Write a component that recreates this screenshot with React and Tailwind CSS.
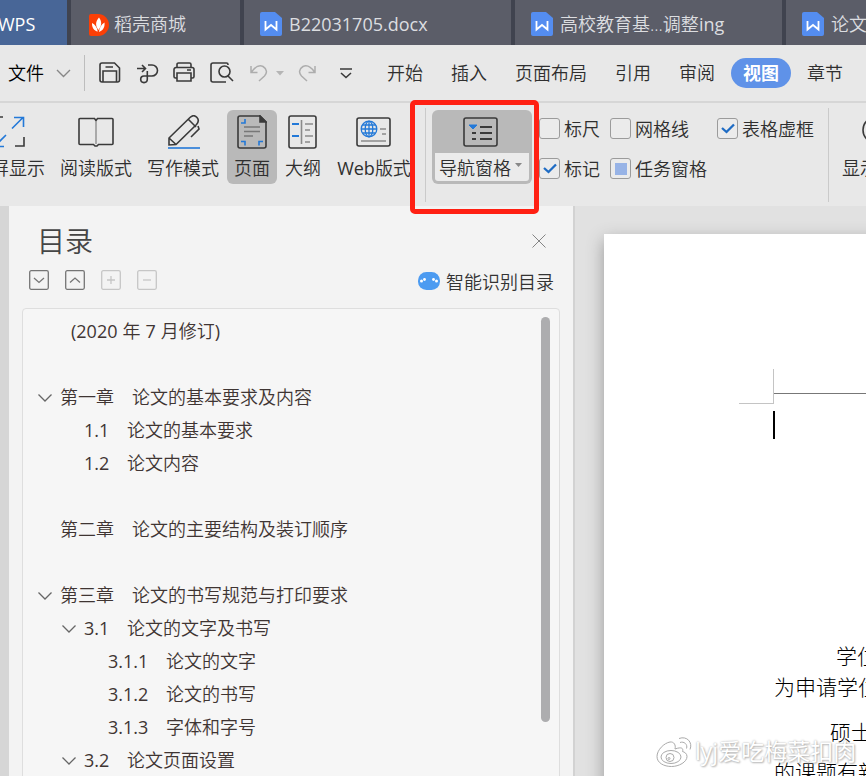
const tabs = [
  { title: "B22031705", suffix: ".docx", width: "w-[267px]" },
  { title: "高校教育基...调整", suffix: "ing", width: "w-[267px]" },
  { title: "论文格式", width: "w-[267px]" },
];

const outline = [
  { blank: true, dated: true },
  { blank: true },
  { num: "第一章", text: "论文的基本要求及内容", open: true, indent: "pl-[60px]", numWidth: "w-[72px]" },
  { num: "1.1", text: "论文的基本要求", indent: "pl-[84px]", numWidth: "w-[43px] font-normal" },
  { num: "1.2", text: "论文内容", indent: "pl-[84px]", numWidth: "w-[43px] font-normal" },
  { blank: true },
  { num: "第二章", text: "论文的主要结构及装订顺序", indent: "pl-[60px]", numWidth: "w-[72px]" },
  { blank: true },
  { num: "第三章", text: "论文的书写规范与打印要求", open: true, indent: "pl-[60px]", numWidth: "w-[72px]" },
  { num: "3.1", text: "论文的文字及书写", open: true, indent: "pl-[84px]", numWidth: "w-[43px] font-normal" },
  { num: "3.1.1", text: "论文的文字", indent: "pl-[108px]", numWidth: "w-[58px] font-normal" },
  { num: "3.1.2", text: "论文的书写", indent: "pl-[108px]", numWidth: "w-[58px] font-normal" },
  { num: "3.1.3", text: "字体和字号", indent: "pl-[108px]", numWidth: "w-[58px] font-normal" },
  { num: "3.2", text: "论文页面设置", open: true, indent: "pl-[84px]", numWidth: "w-[43px] font-normal" },
];

function Icon({ w, h, className = "", children, stroke = "#3a3a3a", sw = 1.6 }) {
  return (
    <svg
      width={w}
      height={h}
      viewBox={`0 0 ${w} ${h}`}
      fill="none"
      stroke={stroke}
      strokeWidth={sw}
      className={`block shrink-0 ${className}`}
    >
      {children}
    </svg>
  );
}

function WordIcon() {
  return (
    <Icon w={22} h={24} stroke="none" className="mt-[3px]">
      <path d="M2 0h13l7 6v16a2 2 0 0 1-2 2H2a2 2 0 0 1-2-2V2a2 2 0 0 1 2-2z" fill="#548df0" />
      <path d="M5.500 9v8.500l5.500-4.500 5.500 4.500V9" stroke="#fff" strokeWidth="1.800" />
    </Icon>
  );
}

function TabBar() {
  return (
    <div className="flex h-[45px] shrink-0 gap-1 bg-[#40434f] text-lg text-[#dcdde0]">
      <div className="flex w-[67px] shrink-0 items-center bg-[#486697] text-white">
        <span className="mt-[3px] -ml-[2px] font-normal">WPS</span>
      </div>
      <div className="flex w-[169px] shrink-0 items-center bg-[#5b5d68] pl-[18px]">
        <Icon w={20} h={22} stroke="none" className="mt-1">
          <path d="M2 0h7a11 11 0 0 1 0 22H2a2 2 0 0 1-2-2V2a2 2 0 0 1 2-2z" fill="#fb3f06" />
          <path d="M10 3.500c3 4 3 8-.6 12.500C6 11.500 6.500 7.500 10 3.500z" fill="#fff" />
          <path d="M3 9c3 1.500 5 4 5.800 8.500C5 17 2.800 13.500 3 9zM15.500 8.500c.5 5-1.500 8-5.500 9.500.4-4 2-7.500 5.500-9.500z" fill="#fff" />
        </Icon>
        <span className="mt-[3px] ml-[5px]">稻壳商城</span>
      </div>
      {tabs.map((tab, i) => (
        <div key={tab.title} className={`flex shrink-0 items-center bg-[#5b5d68] pl-4 ${tab.width}`}>
          <WordIcon />
          <span className={`mt-[3px] ml-[7px] whitespace-nowrap ${i === 0 ? "font-normal" : ""}`}>
            {tab.title}
            <span className="font-normal">{tab.suffix}</span>
          </span>
        </div>
      ))}
    </div>
  );
}

function MenuBar() {
  return (
    <div className="flex h-[56px] shrink-0 items-center whitespace-nowrap text-lg text-[#2f2f2f]">
      <span className="ml-2 text-black">文件</span>
      <Icon w={15} h={9} stroke="#888" sw={1.400} className="ml-3">
        <path d="M1 1l6.500 6.500L14 1" />
      </Icon>
      <div className="ml-[13px] h-9 w-px bg-[#bdbdbd]" />
      <Icon w={22} h={21} className="-mt-[2px] ml-[14px]">
        <path d="M3 1h12.500l5 5v12a2 2 0 0 1-2 2H3a2 2 0 0 1-2-2V3a2 2 0 0 1 2-2z" />
        <path d="M4 20v-11h13.500v11M6.500 5H14" />
      </Icon>
      <Icon w={22} h={21} className="ml-[16px]">
        <path d="M0 5.500h8M5 2l3.500 3.500L5 9M11 2h4a5.500 5.500 0 0 1 0 11H7a3.300 3.300 0 1 0 3.300 3.300V8" />
      </Icon>
      <Icon w={22} h={21} className="-mt-[2px] ml-[14px]">
        <path d="M4 5V2.500A1.500 1.500 0 0 1 5.500 1h11A1.500 1.500 0 0 1 18 2.500V5M4 16H2.500A1.500 1.500 0 0 1 1 14.500v-7A2 2 0 0 1 3 5.500h16a2 2 0 0 1 2 2v7a1.500 1.500 0 0 1-1.500 1.500H18M4 11h14v8H4zM14 8h4" />
      </Icon>
      <Icon w={24} h={21} className="-mt-[2px] ml-[15px]">
        <path d="M18 3V2.500A1.500 1.500 0 0 0 16.500 1H3a2 2 0 0 0-2 2v15a2 2 0 0 0 2 2h13" />
        <circle cx="14.500" cy="9.500" r="5.500" />
        <path d="M18 14l5 5" />
      </Icon>
      <Icon w={18} h={18} stroke="#adadad" sw={1.500} className="ml-[16px]">
        <path d="M1 2v6.500h6.500M1.500 8C5 3 9 .5 13 2.500c4 2.500 4.500 6.500 1.500 9.500L9 17" />
      </Icon>
      <Icon w={8} h={5} stroke="none" className="ml-[8px]">
        <path d="M0 0h8L4 4.500z" fill="#b5b5b5" />
      </Icon>
      <Icon w={18} h={18} stroke="#adadad" sw={1.500} className="ml-[14px]">
        <path d="M17 2v6.500h-6.500M16.500 8C13 3 9 .5 5 2.500c-4 2.500-4.500 6.500-1.500 9.500L9 17" />
      </Icon>
      <Icon w={12} h={11} className="ml-[24px]">
        <path d="M0 1h12M1 5l5 4.500L11 5" />
      </Icon>
      <span className="ml-[35px]">开始</span>
      <span className="ml-7">插入</span>
      <span className="ml-7">页面布局</span>
      <span className="ml-7">引用</span>
      <span className="ml-7">审阅</span>
      <span className="ml-4 flex h-[30px] w-[60px] items-center justify-center rounded-full bg-[#5f92e8] font-bold text-white">
        视图
      </span>
      <span className="ml-4">章节</span>
    </div>
  );
}

function Tool({ label, className, children }) {
  return (
    <div className={`flex h-[74px] shrink-0 flex-col items-center ${className}`}>
      <div className="flex h-[44px] items-center">{children}</div>
      <span className="text-lg leading-[28px]">{label}</span>
    </div>
  );
}

function Check({ label, state }) {
  return (
    <div className="flex h-[21px] items-center whitespace-nowrap text-lg">
      <span className="flex size-[21px] shrink-0 items-center justify-center rounded-[3px] border-[1.500px] border-[#9b9b9b] bg-[#ebebeb]">
        {state === "on" && (
          <Icon w={14} h={11} stroke="#1f6cc4" sw={2.300}>
            <path d="M1 5l4.500 4L13 1.500" />
          </Icon>
        )}
        {state === "mixed" && <span className="size-3 bg-[#97b3e6]" />}
      </span>
      <span className="ml-1">{label}</span>
    </div>
  );
}

function Ribbon() {
  return (
    <div className="flex h-[105px] shrink-0 items-start border-t-2 border-[#d6d6d6] pt-[7px] whitespace-nowrap text-[#2f2f2f]">
      <Tool label="全屏显示" className="-ml-[27px] w-[72px]">
        <Icon w={32} h={32}>
          <path d="M1 10V1h9M31 21v9h-9" />
          <path d="M19 12.500L30 1.500M21 1.500h9.500V11M13 19L2 30M2 21v9.500h9" stroke="#2379d8" />
        </Icon>
      </Tool>
      <Tool label="阅读版式" className="ml-[15px] w-[72px]">
        <Icon w={36} h={30} className="-ml-px">
          <path d="M18 3.500L16.500 1.500H2a1 1 0 0 0-1 1v24a1 1 0 0 0 1 1h13.500l1.500 1.500h2l1.500-1.500H34a1 1 0 0 0 1-1v-24a1 1 0 0 0-1-1H19.500z" />
          <path d="M18 4v23" stroke="#999" />
        </Icon>
      </Tool>
      <Tool label="写作模式" className="ml-[15px] w-[72px]">
        <Icon w={32} h={34} className="ml-[2px]">
          <path d="M1 30V23L22 2.500c2.500-2.500 5-2.300 7 0s1.700 4.500-.5 7L8 29.500zM1 23l7 6.500M20 4l8 8M30 11l1 3-8 8" />
          <path d="M0 33h32" stroke="#2379d8" />
        </Icon>
      </Tool>
      <Tool label="页面" className="ml-[8px] w-[50px] rounded-md bg-[#b9b9b9]">
        <Icon w={30} h={34}>
          <path d="M3 1h20l6 6v24a2 2 0 0 1-2 2H3a2 2 0 0 1-2-2V3a2 2 0 0 1 2-2z" />
          <path d="M23 1v6h6z" fill="#3a3a3a" />
          <path d="M7 12h16M7 16.500h16M7 21h9" stroke="#777" />
          <path d="M4 8h4V4M4 26.500h4v4M26 26.500h-4v4" stroke="#2379d8" />
        </Icon>
      </Tool>
      <Tool label="大纲" className="ml-[8px] w-9">
        <Icon w={29} h={34} className="-ml-[2px]">
          <rect x="1" y="1" width="27" height="32" rx="2" />
          <path d="M13.500 5v24M17 9h8M17 15h5M17 21h8M17 27h5" stroke="#8a8a8a" />
          <path d="M4 9h7M4 21h7" stroke="#2379d8" strokeWidth="2" />
        </Icon>
      </Tool>
      <Tool label={<><span className="font-normal">Web</span>版式</>} className="ml-[15px] w-[76px]">
        <Icon w={35} h={30} className="-ml-[2px]">
          <rect x="1" y="1" width="33" height="28" rx="2" />
          <path d="M24 12h6M26 17h4M5 24h25" stroke="#8a8a8a" />
          <g stroke="#2379d8" strokeWidth="1.300">
            <circle cx="13" cy="12" r="7.800" />
            <ellipse cx="13" cy="12" rx="3.800" ry="7.800" />
            <path d="M13 4v16M5 12h16M6.500 8h13M6.500 16h13" />
          </g>
        </Icon>
      </Tool>
      <div className="-mt-[2px] ml-[13px] h-[94px] w-px shrink-0 bg-[#cacaca]" />
      <div className="ml-[6px] flex h-[74px] w-[100px] shrink-0 flex-col rounded-md bg-[#b9b9b9] p-[3px] pt-0">
        <div className="flex h-[43px] items-center justify-center">
          <Icon w={35} h={30} className="-ml-[3px]">
            <rect x="1" y="1" width="33" height="28" rx="2" />
            <path d="M17 10h12M17 16h12M17 22h12M9 16h4M9 22h4" strokeWidth="2" />
            <path d="M6 8h8l-4 4z" fill="#2379d8" stroke="#2379d8" strokeWidth="1" />
          </Icon>
        </div>
        <div className="flex h-7 items-center rounded-b-[3px] bg-[#ebebeb] pl-[4px] text-lg">
          <span className="mt-[2px] leading-7">导航窗格</span>
          <Icon w={7} h={5} stroke="none" className="-mt-[4px] ml-1">
            <path d="M0 0h7L3.500 4z" fill="#888" />
          </Icon>
        </div>
      </div>
      <div className="ml-[7px] grid grid-cols-[71px_107px_auto] gap-y-[19px] pt-[8px]">
        <Check label="标尺" />
        <Check label="网格线" />
        <Check label="表格虚框" state="on" />
        <Check label="标记" state="on" />
        <Check label="任务窗格" state="mixed" />
      </div>
      <div className="-mt-[2px] ml-[14px] h-[94px] w-px shrink-0 bg-[#cacaca]" />
      <Tool label="显示比例" className="ml-[13px] w-[72px]">
        <Icon w={34} h={34}>
          <circle cx="15" cy="15" r="13" />
          <path d="M25 25l8 8" />
        </Icon>
      </Tool>
    </div>
  );
}

function BoxButton({ path, dim }) {
  return (
    <Icon w={20} h={20} stroke={dim ? "#c6c6c6" : "#757575"} sw={1.300}>
      <rect x="0.700" y="0.700" width="18.600" height="18.600" rx="1.500" />
      <path d={path} />
    </Icon>
  );
}

function OutlineRow({ row }) {
  if (row.dated) {
    return (
      <div className="flex h-[33px] items-center gap-[5px] pl-[48px] whitespace-nowrap">
        <span className="font-normal">(2020</span>
        <span>年</span>
        <span className="font-normal">7</span>
        <span>
          月修订<span className="font-normal">)</span>
        </span>
      </div>
    );
  }
  if (row.blank) return <div className="h-[33px]" />;
  return (
    <div className={`-ml-[23px] flex h-[33px] items-center whitespace-nowrap ${row.indent}`}>
      {row.open && (
        <Icon w={14} h={8} stroke="#666" sw={1.300} className="mt-[3px] mr-[8px] -ml-[22px]">
          <path d="M.5.500L7 7 13.500.500" />
        </Icon>
      )}
      <span className={`shrink-0 ${row.numWidth}`}>{row.num}</span>
      <span>{row.text}</span>
    </div>
  );
}

function OutlinePanel() {
  return (
    <div className="flex w-[566px] shrink-0 flex-col border-r-2 border-[#d2d2d2] bg-[#f3f3f3] px-[13px]">
      <div className="flex h-[64px] shrink-0 items-center justify-between pt-[5px] pr-[14px] pl-[15px]">
        <h2 className="mt-px text-[28px] text-[#454545]">目录</h2>
        <Icon w={14} h={14} stroke="#777" sw={0.900}>
          <path d="M.5.500l13 13M13.500.500l-13 13" />
        </Icon>
      </div>
      <div className="flex h-[20px] shrink-0 items-center gap-4 pr-[6px] pl-[7px]">
        <BoxButton path="M5 8l5 4.500L15 8" />
        <BoxButton path="M5 12.500L10 8l5 4.500" />
        <BoxButton path="M6 10h8M10 6v8" dim />
        <BoxButton path="M6 10h8" dim />
        <div className="ml-auto flex items-center text-lg text-[#333]">
          <Icon w={22} h={18} stroke="none" className="mt-px">
            <rect width="22" height="18" rx="8.500" fill="#4c9bf1" />
            <g fill="#fff">
              <circle cx="3.500" cy="9" r="1.500" />
              <circle cx="6.500" cy="7.500" r="1.400" />
              <circle cx="15.500" cy="7.500" r="1.400" />
              <circle cx="18.500" cy="9" r="1.500" />
            </g>
          </Icon>
          <span className="mt-[3px] ml-[6px]">智能识别目录</span>
        </div>
      </div>
      <div className="mt-[18px] flex h-[480px] shrink-0 rounded-t border border-[#dedede] bg-[#f6f6f6] text-lg text-[#3f3533]">
        <div className="flex-1 pt-[5px]">
          {outline.map((row, i) => (
            <OutlineRow key={i} row={row} />
          ))}
        </div>
        <div className="mt-[8px] mr-[9px] h-[405px] w-[9px] rounded-full bg-[#adadaf]" />
      </div>
    </div>
  );
}

function Page() {
  return (
    <div className="min-w-0 flex-1 overflow-hidden bg-[#e1e1e1] pt-[28px] pl-[29px]">
      <div className="h-[600px] w-[700px] bg-white text-[21px] font-light whitespace-nowrap text-black shadow-[0_6px_16px_#999]">
        <div className="flex pt-[135px] pl-[135px]">
          <div className="h-[35px] w-[35px] border-r border-b border-[#c4c4c4]" />
          <div className="mt-6 h-px w-[400px] bg-[#777]" />
        </div>
        <div className="mt-[7px] ml-[169px] h-[28px] w-[2px] bg-black" />
        <p className="mt-[201px] ml-[232px] leading-8">学位论文是</p>
        <p className="-mt-px ml-[170px] leading-8">为申请学位而撰写</p>
        <p className="mt-[13px] ml-[226px] leading-8">硕士学位</p>
        <p className="mt-[8px] ml-[170px] leading-8">的课题有新的见解</p>
      </div>
    </div>
  );
}

export default function App() {
  return (
    <div className="relative flex h-[776px] w-[866px] flex-col overflow-hidden bg-[#e8e8e8] font-['Open_Sans','Noto_Sans_CJK_SC',sans-serif] font-[350]">
      <TabBar />
      <MenuBar />
      <Ribbon />
      <div className="flex min-h-0 flex-1 bg-[#d6d6d6] pl-[9px]">
        <OutlinePanel />
        <Page />
      </div>

      {/* highlight around the navigation pane button */}
      <div className="absolute top-[100px] left-[410px] h-[114px] w-[129px] rounded-[5px] border-[5px] border-[#ff2013]" />

      {/* weibo watermark */}
      <div className="absolute top-[735px] left-[656px] flex items-center whitespace-nowrap">
        <Icon w={37} h={33} stroke="#aaa" sw={1}>
          <path
            d="M14 7C8 8 1 15 1 21.500 1 28 8 31.500 15.500 31.500S31 27 31 21.500c0-3-2.500-4.500-4.500-5 1-3-.5-5-7.500-2.500 1-4-1-7.500-5-7z"
            fill="#fff"
          />
          <ellipse cx="15" cy="22" rx="10" ry="6.500" />
          <circle cx="14" cy="22.500" r="4" />
          <circle cx="13" cy="23.500" r="1" />
          <path d="M23 3.500c8-3 14 4 11 11M24 7.500c4-1.500 8 2 6.500 6" />
        </Icon>
        <span className="ml-[2px] text-[23px] leading-[33px] font-normal text-white [text-shadow:0_0_2px_#aaa,1px_1px_2px_#bbb]">
          lyj爱吃梅菜扣肉
        </span>
      </div>
    </div>
  );
}
